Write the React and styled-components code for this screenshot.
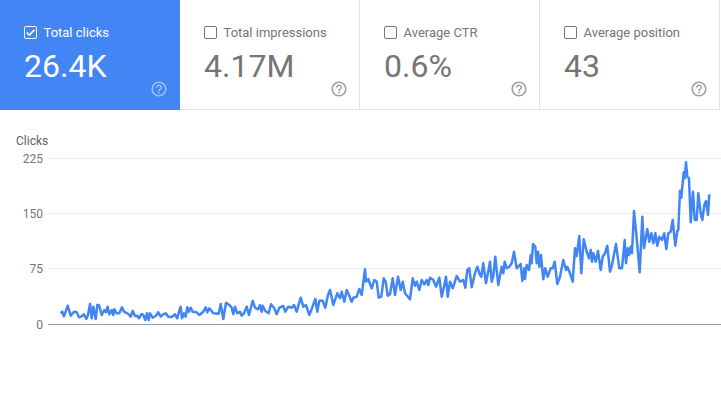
import React from "react"
import styled, {createGlobalStyle} from "styled-components"

const GlobalStyle = createGlobalStyle`
    html, body {
        margin: 0;
        background: #fff;
    }
    body {
        font-family: Roboto, "Liberation Sans", sans-serif;
    }
`

const metrics = [
    {title: "Total clicks", value: "26.4K", active: true},
    {title: "Total impressions", value: "4.17M"},
    {title: "Average CTR", value: "0.6%"},
    {title: "Average position", value: "43"},
]

const ticks = ["225", "150", "75"]

// traced from the chart, in 3x units, one list per 240px stretch of the x axis
const seg1 = [182,565,187,560,192,574,203,542,212,572,222,560,230,562,237,577,245,574,252,568,259,582,264,570,270,537,275,580,280,545,287,582,292,540,297,540,305,570,313,555,318,562,323,545,328,568,335,555,340,570,343,553,350,565,358,565,366,547,372,560,385,567,392,575,398,558,405,573,412,572,417,580,425,567,430,570,436,585,441,565,446,585,450,565,458,578,468,572,475,562,482,575,490,568,497,565,505,575,515,576,525,568,532,580,537,560,542,545,546,580,552,565,557,575,562,547,567,560,572,548,578,560,590,562,598,570,610,560,617,547,622,562,628,550,640,565,656,566,662,537,670,582,678,533,688,540,695,548,700,568,705,545,712,565]
const seg2 = [0,560,5,572,12,565,20,545,27,570,38,527,45,548,55,553,60,540,65,560,68,542,76,558,86,565,93,538,103,550,110,568,118,548,130,543,136,560,145,545,155,548,162,540,170,560,182,518,190,545,198,540,208,570,214,555,226,522,232,560,238,527,248,527,256,548,264,510,270,495,280,540,285,525,292,505,300,520,305,500,313,530,320,495,328,512,335,530,340,518,350,515,358,492,365,510,375,433,378,470,385,462,395,490,403,465,410,470,416,518,424,515,431,460,437,470,443,512,450,508,458,460,465,510,474,455,482,495,488,470,495,505,510,523,518,460,525,482,530,470,538,495,545,465,553,478,560,465,565,480,570,458,580,465,588,485,598,458,605,515,612,485,618,455,623,515,630,470,638,490,650,453,660,470,670,465,676,488,682,435,688,430,695,487,705,445,712,425]
const seg3 = [0,450,4,455,10,415,18,475,30,410,35,470,40,455,46,395,55,480,65,425,70,445,74,410,80,430,88,425,95,415,102,380,110,430,122,417,127,468,133,430,135,462,140,420,147,435,152,390,155,415,159,357,166,365,170,415,174,380,178,425,183,390,190,463,196,430,203,455,212,430,218,430,224,410,232,477,240,455,250,405,258,435,262,425,270,445,278,470,285,370,290,393,298,333,304,445,311,343,320,380,327,400,332,375,336,410,340,385,347,410,354,378,362,435,368,395,375,385,382,362,390,440,396,420,408,357,418,430,426,430,434,345,438,415,443,370,447,390,452,365,456,385,462,258,470,340,479,442,487,275,492,370,502,312,508,350,514,325,520,355,526,325,532,362,538,335,546,345,553,325,559,372,565,325,572,320,578,285,586,362,592,318,595,315,600,197,604,218,611,142,614,160,618,112,622,155,627,160,632,292,639,200,644,285,650,285,655,205,662,265,667,285,673,240,678,228,684,270,688,208]

const toPoints = (seg, offset) => {
    const out = []
    for (let i = 0; i < seg.length; i += 2) {
        out.push(`${(offset + seg[i] / 3).toFixed(1)},${(seg[i + 1] / 3).toFixed(1)}`)
    }
    return out.join(" ")
}

const linePoints = [toPoints(seg1, 0), toPoints(seg2, 240), toPoints(seg3, 480)].join(" ")

const HelpIcon = () => (
    <svg width="18" height="18" viewBox="0 0 24 24" fill="currentColor">
        <path d="M11 18h2v-2h-2v2zm1-16C6.48 2 2 6.48 2 12s4.48 10 10 10 10-4.48 10-10S17.52 2 12 2zm0 18c-4.41 0-8-3.59-8-8s3.59-8 8-8 8 3.59 8 8-3.59 8-8 8zm0-14c-2.21 0-4 1.79-4 4h2c0-1.1.9-2 2-2s2 .9 2 2c0 2-3 1.75-3 5h2c0-2.25 3-2.5 3-5 0-2.21-1.79-4-4-4z"/>
    </svg>
)

const App = () => {
    return <Page>
        <GlobalStyle/>
        <MetricRow>
            {metrics.map(m => (
                <Metric key={m.title} $active={m.active}>
                    <MetricTitle>
                        <Checkbox $active={m.active}>
                            {m.active && <svg width="11" height="11" viewBox="0 0 11 11" fill="none" stroke="#fff" strokeWidth="1.6">
                                <path d="M1.8 5.6l2.6 2.5 5-5.2"/>
                            </svg>}
                        </Checkbox>
                        {m.title}
                    </MetricTitle>
                    <MetricValue>{m.value}</MetricValue>
                    <Help $active={m.active}><HelpIcon/></Help>
                </Metric>
            ))}
        </MetricRow>
        <Chart>
            <AxisTitle>Clicks</AxisTitle>
            <Plot>
                {ticks.map(t => (
                    <Tick key={t}>
                        <TickLabel>{t}</TickLabel>
                        <GridLine/>
                    </Tick>
                ))}
                <Tick $last>
                    <TickLabel>0</TickLabel>
                    <GridLine $axis/>
                </Tick>
                <Line viewBox="0 0 721 220">
                    <polyline points={linePoints} fill="none" stroke="#4285f4" strokeWidth="2.5" strokeLinejoin="round"/>
                </Line>
            </Plot>
        </Chart>
    </Page>
}
export default App


const Page = styled.div`
    width: 721px;
    height: 418px;
    overflow: hidden;
    background: #fff;
`

const MetricRow = styled.div`
    display: grid;
    grid-template-columns: repeat(4, 180px);
`

const Metric = styled.div`
    box-sizing: border-box;
    height: 110px;
    padding: 24px ${p => p.$active ? "12px" : "11px"} 11px 24px;
    display: flex;
    flex-direction: column;
    background: ${p => p.$active ? "#4285f4" : "#fff"};
    color: ${p => p.$active ? "#fff" : "#757575"};
    border-bottom: ${p => p.$active ? "none" : "1px solid #e0e0e0"};
    border-right: ${p => p.$active ? "none" : "1px solid #e0e0e0"};
`

const MetricTitle = styled.div`
    display: flex;
    align-items: center;
    gap: 6.5px;
    font-size: 13px;
    line-height: 17px;
`

const Checkbox = styled.span`
    box-sizing: border-box;
    width: 13px;
    height: 13px;
    display: flex;
    align-items: center;
    justify-content: center;
    border: 1px solid ${p => p.$active ? "#fff" : "#757575"};
    border-radius: 2px;
`

const MetricValue = styled.div`
    margin-top: 11px;
    font-size: 32px;
    line-height: 28px;
`

const Help = styled.div`
    display: flex;
    align-self: flex-end;
    color: ${p => p.$active ? "rgba(255,255,255,0.5)" : "#9e9e9e"};
`

const Chart = styled.div`
    padding-top: 24px;
`

const AxisTitle = styled.div`
    padding-left: 16px;
    font-size: 12px;
    line-height: 14px;
    color: #616161;
`

const Plot = styled.div`
    position: relative;
    height: 205px;
    margin-top: -17px;
`

const Tick = styled.div`
    display: flex;
    align-items: center;
    height: ${p => p.$last ? "57px" : "55px"};
`

const TickLabel = styled.div`
    box-sizing: border-box;
    width: 48px;
    padding-right: 5px;
    text-align: right;
    font-size: 12px;
    color: #757575;
`

const GridLine = styled.div`
    flex: 1;
    height: 1px;
    background: ${p => p.$axis ? "#9e9e9e" : "#ececec"};
`

const Line = styled.svg`
    position: absolute;
    left: 0;
    top: -6px;
    width: 721px;
    height: 220px;
`
